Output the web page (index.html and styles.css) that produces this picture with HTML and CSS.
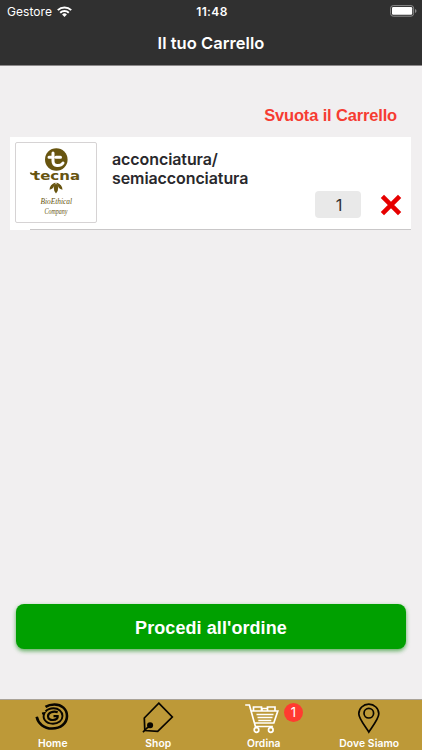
FILE: index.html
```html
<!DOCTYPE html>
<html lang="it">
<head>
<meta charset="utf-8">
<title>Il tuo Carrello</title>
<link rel="stylesheet" href="styles.css">
</head>
<body>
<div class="app">
  <header class="header">
    <div class="status">
      <div class="carrier"><span>Gestore</span>
        <svg width="15" height="11" viewBox="0 0 15 11"><g fill="none" stroke="#fff" stroke-width="2"><path d="M.8 4.100a9.600 9.600 0 0 1 13.400 0"/><path d="M3.200 6.800a6.200 6.200 0 0 1 8.600 0"/></g><path d="M5.100 8.500a3.500 3.500 0 0 1 4.800 0L7.500 10.900z" fill="#fff"/></svg>
      </div>
      <time class="clock">11:48</time>
      <svg class="battery" width="27" height="12" viewBox="0 0 27 12"><rect x=".6" y=".6" width="23" height="10.600" rx="2.600" fill="none" stroke="#8b8b8b"/><rect x="2" y="2" width="20.200" height="7.800" rx="1.200" fill="#fff"/><path d="M25 4v4c2-.7 2-3.300 0-4" fill="#8b8b8b"/></svg>
    </div>
    <h1 class="title">Il tuo Carrello</h1>
  </header>
  <main class="content">
    <a class="empty-cart">Svuota il Carrello</a>
    <article class="item">
      <div class="thumb">
        <svg width="79" height="79" viewBox="0 0 79 79" fill="#67540f">
          <circle cx="40.300" cy="16.500" r="11.300"/>
          <path d="M37 10v8c0 6 7.500 5.500 10 2M33 14.300h3.500M40 14.300h4.500" fill="none" stroke="#fff" stroke-width="3" stroke-linecap="round"/>
          <text class="brand" x="17" y="37" textLength="47" lengthAdjust="spacingAndGlyphs">tecna</text>
          <path d="M14.500 29.500q.5 2.300 6 2" fill="none" stroke="#67540f" stroke-width="1.600"/>
          <path d="M40 40q4.500 5.500 0 10.500q-4.500-5 0-10.500M39.500 39.500q-1.500 6.500-6 7.200q.2-5.200 6-7.200M40.500 39.500q1.500 6.500 6 7.200q-.2-5.200-6-7.200"/>
          <text class="script" x="24.500" y="61" textLength="31.500" lengthAdjust="spacingAndGlyphs">BioEthical</text>
          <text class="script" x="28.500" y="70.500" textLength="23" lengthAdjust="spacingAndGlyphs">Company</text>
        </svg>
      </div>
      <h2 class="name">acconciatura/<br>semiacconciatura</h2>
      <div class="controls">
        <span class="quantity">1</span>
        <svg class="remove" width="22" height="22" viewBox="0 0 22 22"><path d="M2.400 2.400l17.200 17.200M19.600 2.400L2.400 19.600" stroke="#e60000" stroke-width="4.600"/></svg>
      </div>
    </article>
    <button class="checkout">Procedi all'ordine</button>
  </main>
  <nav class="tabs">
    <a class="tab"><svg width="36" height="32" viewBox="0 0 36 32" fill="none" stroke="#090600"><path d="M1.700 15.700C3 22.500 9 27.500 17 27.500c8.700 0 15-5.200 15-12.500C32 8 26.500 3.500 19.500 3.500c-3.700 0-6.500.7-9 2.300" stroke-width="2.600"/><path d="M7 12.500l2.500-.4C7 17 10.300 22.700 18 22.700c5.500 0 9.500-3.300 9.500-7.700c0-4.500-4-7.700-9-7.700c-3.300 0-6.200 1.200-8 3.200" stroke-width="1.900"/><path d="M22.700 11.300c-4.200-1.500-9.700.1-9.700 3.900c0 3 2.600 3.900 5 3.800c3.200-.1 5-1.500 4.700-3.900h-4.200" stroke-width="2.200"/></svg><span>Home</span></a>
    <a class="tab"><svg width="36" height="32" viewBox="0 0 36 32" fill="none" stroke="#090600" stroke-width="1.700"><path d="M18.800 2.200L32.300 16 17.700 30.300 4.800 29.500 4.300 17z" /><circle cx="10.100" cy="24.300" r="2.200" fill="#090600"/><path d="M11.500 25.200Q7.500 25.500 3 31.200"/></svg><span>Shop</span></a>
    <a class="tab"><svg width="36" height="32" viewBox="0 0 36 32" fill="none" stroke="#fff" stroke-width="1.700"><path d="M-.8 4h4.200l6 21.500h17.500M5.500 10h26.300l-4 12H8.800M7.500 9.800V6h8v4M16 9.500V7.500h5.500v2M21.500 9.500V6H29v4M10.500 13.500h17M11.500 16.500h15M12.300 19.500h13"/><circle cx="10.500" cy="29" r="2.300"/><circle cx="24.800" cy="29" r="2.300"/></svg><span>Ordina</span><b class="badge">1</b></a>
    <a class="tab"><svg width="36" height="32" viewBox="0 0 36 32" fill="none" stroke="#090600" stroke-width="1.700"><path d="M17.800 31C15.500 27 7.800 18 7.800 12.800a10 9.600 0 0 1 20 0C27.800 18 20.200 27 17.800 31z"/><circle cx="17.800" cy="12.200" r="4.800"/></svg><span>Dove Siamo</span></a>
  </nav>
</div>
</body>
</html>
```
FILE: styles.css
```css
* { box-sizing: border-box; }
body { margin: 0; font-family: Inter, "Liberation Sans", sans-serif; }
.app { width: 422px; height: 750px; display: flex; flex-direction: column; background: #f1eff0; overflow: hidden; }
.header { height: 66px; background: #303030; border-bottom: 1px solid #8c898a; color: #fff; }
.status { height: 22px; padding: 0 5px 0 7px; display: grid; grid-template-columns: 1fr auto 1fr; align-items: center; font-size: 12px; }
.carrier { display: flex; align-items: center; gap: 5px; letter-spacing: .05px; }
.clock { font-weight: 600; letter-spacing: .4px; }
.battery { justify-self: end; }
.title { margin: 0; font-size: 16.500px; line-height: 42px; font-weight: 600; text-align: center; letter-spacing: .05px; }
.content { flex: 1; display: flex; flex-direction: column; padding: 38px 11px 50px 10px; }
.empty-cart { align-self: flex-end; margin-right: 14px; height: 33px; font: bold 16.500px/22px "Liberation Sans", Arial, sans-serif; letter-spacing: -.16px; color: #f63c32; }
.item { height: 93px; padding: 5px 9px 0 5px; display: flex; background: linear-gradient(#c9c7c8, #c9c7c8) 20px 100% / 100% 1px no-repeat, #fff; }
.thumb { width: 82px; height: 81px; flex: none; border: 1px solid #d6d3d4; border-radius: 2px; }
.thumb svg { display: block; }
.brand { font: bold 12.500px "DejaVu Sans", sans-serif; }
.script { font: italic 8.500px "Liberation Serif", serif; }
.name { margin: 8px 0 0 15px; width: 180px; flex: none; color: #29282c; font-size: 16px; line-height: 19px; font-weight: 600; letter-spacing: -.09px; }
.controls { margin: 49px 0 0 auto; display: flex; align-items: center; align-self: flex-start; gap: 19px; }
.quantity { width: 46px; height: 27px; padding: 1px 0 0 2px; border-radius: 4px; background: #e9e9e9; color: #333; font-size: 16.500px; line-height: 27px; text-align: center; }
.checkout { margin: auto 5px 0 6px; padding: 3px 0 0; height: 45px; border: 0; border-radius: 8px; background: #00a000; box-shadow: 0 2px 4px #168d16aa; color: #fff; font: bold 18px "Liberation Sans", Arial, sans-serif; letter-spacing: .08px; }
.tabs { height: 51px; border-top: 1px solid #aaa398; background: #bd9938; display: grid; grid-template-columns: repeat(4, 1fr); color: #fff; font-size: 10.300px; font-weight: 600; }
.tab { position: relative; display: flex; flex-direction: column; align-items: center; padding-top: 1px; line-height: 20px; letter-spacing: .1px; }
.tab svg { flex: none; overflow: visible; }
.badge { position: absolute; left: 73px; top: 3px; width: 19px; height: 19px; border-radius: 50%; background: #ff3b30; font-size: 13px; font-weight: 400; line-height: 19px; text-align: center; letter-spacing: 0; }
```
